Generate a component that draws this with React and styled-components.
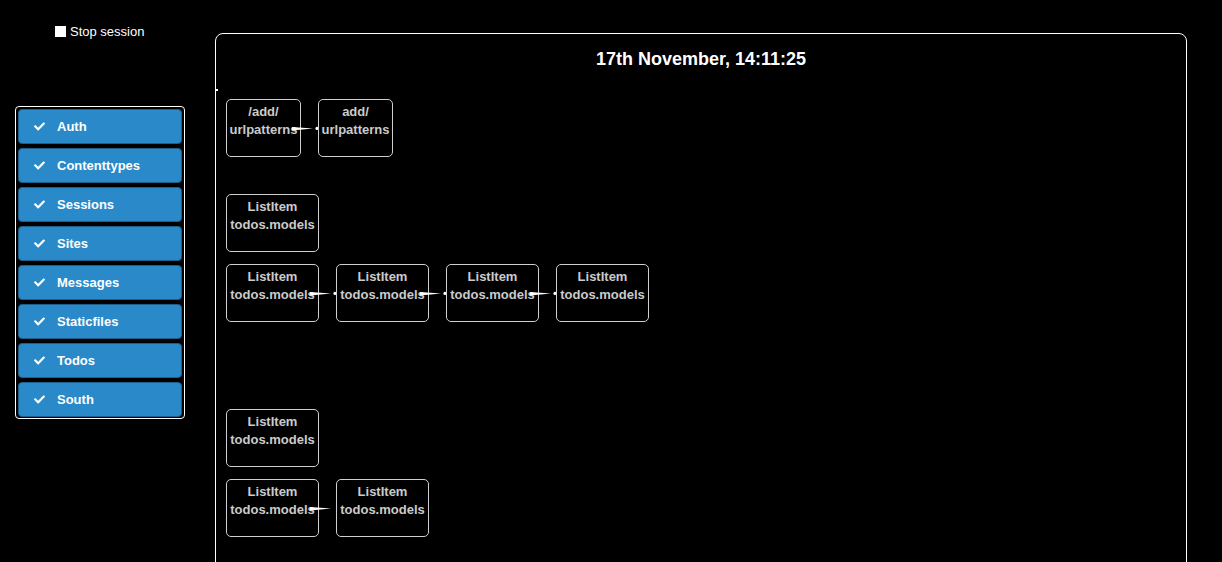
import React from "react";
import styled, { createGlobalStyle } from "styled-components";
import { FaCheck } from "react-icons/fa";

const Global = createGlobalStyle`
  html, body { margin: 0; padding: 0; background: #000; overflow: hidden; }
  body { font-family: "Liberation Sans", Arial, sans-serif; color: #fff; }
  * { box-sizing: border-box; }
`;

const Page = styled.div`
  display: flex;
  align-items: flex-start;
  padding-left: 15px;
  gap: 30px;
  min-height: 562px;
`;

const LeftColumn = styled.div`
  width: 170px;
  display: flex;
  flex-direction: column;
`;

const StopSession = styled.div`
  display: flex;
  align-items: center;
  gap: 4px;
  margin: 24px 0 0 40px;
  font-size: 13px;
  line-height: 15px;
  color: #fff;
`;

const StopSquare = styled.span`
  display: inline-block;
  width: 11px;
  height: 11px;
  background: #fff;
`;

const AppList = styled.div`
  margin-top: 67px;
  border: 1px solid #fff;
  border-radius: 4px;
  padding: 2px 1px 1px 1px;
  display: flex;
  flex-direction: column;
  gap: 4px;
`;

const AppButton = styled.div`
  height: 35px;
  display: flex;
  align-items: center;
  gap: 12px;
  padding-left: 15px;
  background: #2a89c8;
  border: 1px solid #1d5f8c;
  border-radius: 4px;
  color: #fff;
  font-weight: bold;
  font-size: 13px;
  margin: 0 1px;
  svg { width: 11px; height: 11px; flex: none; }
`;

const MainPanel = styled.div`
  width: 972px;
  margin-top: 33px;
  height: 600px;
  border: 1px solid #fff;
  border-radius: 8px;
  position: relative;
`;

const Title = styled.h1`
  margin: 0;
  padding-top: 14px;
  font-size: 18px;
  line-height: 22px;
  font-weight: bold;
  text-align: center;
  color: #fff;
`;

const Canvas = styled.div`
  position: relative;
  padding: 29px 0 0 10px;
`;

const EdgeMark = styled.span`
  position: absolute;
  left: 0;
  top: 19px;
  width: 2px;
  height: 2px;
  background: #fff;
`;

const Row = styled.div`
  display: flex;
  gap: 17px;
  margin-top: ${(p) => p.$gap || 0}px;
`;

const Node = styled.div`
  position: relative;
  width: ${(p) => p.$w}px;
  height: 58px;
  border: 1px solid #cfcfcf;
  border-radius: 5px;
  padding-top: 3px;
  color: #cbcbcb;
  font-weight: bold;
  font-size: 13px;
  line-height: 18px;
  text-align: center;
  white-space: nowrap;
`;

const Arrow = styled.svg`
  position: absolute;
  left: calc(100% - 8px);
  top: 25px;
  width: 27px;
  height: 8px;
  overflow: visible;
`;

function Edge({ dot = true }) {
  return (
    <Arrow viewBox="0 0 27 8">
      <polygon points="0,2 0,5.6 21,3.4" fill="#fff" />
      {dot && <circle cx="25" cy="3.4" r="1.6" fill="#fff" />}
    </Arrow>
  );
}

function DiagramNode({ w = 93, top, bottom, arrow, dot }) {
  return (
    <Node $w={w}>
      <div>{top}</div>
      <div>{bottom}</div>
      {arrow && <Edge dot={dot} />}
    </Node>
  );
}

const apps = ["Auth", "Contenttypes", "Sessions", "Sites", "Messages", "Staticfiles", "Todos", "South"];

export default function App() {
  return (
    <>
      <Global />
      <Page>
        <LeftColumn>
          <StopSession>
            <StopSquare />
            <span>Stop session</span>
          </StopSession>
          <AppList>
            {apps.map((a) => (
              <AppButton key={a}>
                <FaCheck />
                <span>{a}</span>
              </AppButton>
            ))}
          </AppList>
        </LeftColumn>
        <MainPanel>
          <Title>17th November, 14:11:25</Title>
          <Canvas>
            <EdgeMark />
            <Row>
              <DiagramNode w={75} top="/add/" bottom="urlpatterns" arrow />
              <DiagramNode w={75} top="add/" bottom="urlpatterns" />
            </Row>
            <Row $gap={37}>
              <DiagramNode top="ListItem" bottom="todos.models" />
            </Row>
            <Row $gap={12}>
              <DiagramNode top="ListItem" bottom="todos.models" arrow />
              <DiagramNode top="ListItem" bottom="todos.models" arrow />
              <DiagramNode top="ListItem" bottom="todos.models" arrow />
              <DiagramNode top="ListItem" bottom="todos.models" />
            </Row>
            <Row $gap={87}>
              <DiagramNode top="ListItem" bottom="todos.models" />
            </Row>
            <Row $gap={12}>
              <DiagramNode top="ListItem" bottom="todos.models" arrow dot={false} />
              <DiagramNode top="ListItem" bottom="todos.models" />
            </Row>
          </Canvas>
        </MainPanel>
      </Page>
    </>
  );
}
